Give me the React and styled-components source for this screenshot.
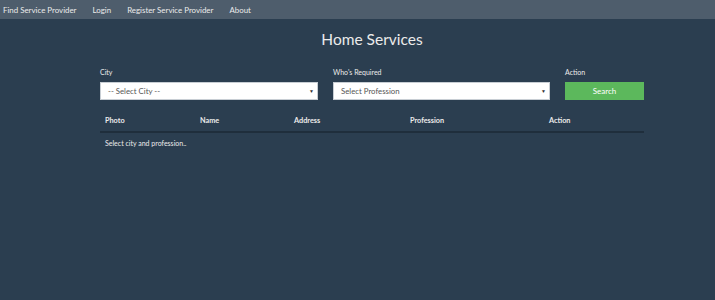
import React from 'react'
import styled, { createGlobalStyle } from 'styled-components'

const GlobalStyle = createGlobalStyle`
  html, body {
    margin: 0;
    padding: 0;
    background: #2b3e50;
    font-family: Lato, "Open Sans", sans-serif;
    color: #ebebeb;
  }
`

const Navbar = styled.nav`
  display: flex;
  align-items: center;
  gap: 16px;
  height: 19px;
  padding-left: 3px;
  background: #4e5d6c;
`

const NavLink = styled.a`
  font-size: 7.9px;
  color: #ebebeb;
  text-decoration: none;
  white-space: nowrap;
`

const Container = styled.main`
  width: 544px;
  margin-left: 100px;
`

const Title = styled.h1`
  margin: 10px 0 0;
  height: 38px;
  line-height: 20px;
  text-align: center;
  font-size: 15.5px;
  font-weight: 400;
  color: #ebebeb;
`

const FormRow = styled.div`
  display: grid;
  grid-template-columns: 218px 217px 79px;
  column-gap: 15px;
`

const Field = styled.div`
  display: flex;
  flex-direction: column;
`

const Label = styled.label`
  font-size: 7px;
  line-height: 10px;
  height: 15px;
  color: #ebebeb;
`

const SelectBox = styled.div`
  position: relative;
  height: 18px;
  box-sizing: border-box;
  background: #fff;
  border: 1px solid #c8ced4;
  padding-left: 7px;
  font-size: 7.8px;
  line-height: 16px;
  color: #555;
`

const Caret = styled.span`
  position: absolute;
  right: 3px;
  top: 0;
  font-size: 5px;
  color: #333;
`

const SearchButton = styled.button`
  height: 18px;
  border: none;
  background: #5cb85c;
  color: #fff;
  font-family: inherit;
  font-size: 8px;
  padding: 0;
`

const Table = styled.table`
  width: 544px;
  margin-top: 11px;
  border-collapse: collapse;
  table-layout: fixed;
  font-size: 7.3px;
`

const HeadCell = styled.th`
  box-sizing: border-box;
  width: ${p => p.w}px;
  text-align: left;
  font-weight: 700;
  padding: 0 5px 2px;
  height: 21px;
  border-bottom: 2px solid #1f2e3c;
`

const Cell = styled.td`
  padding: 6px 5px;
  font-size: 7px;
  color: #ebebeb;
`

const columns = [
  ['Photo', 95],
  ['Name', 94],
  ['Address', 116],
  ['Profession', 139],
  ['Action', 100],
]

export default function App() {
  return (
    <>
      <GlobalStyle />
      <Navbar>
        <NavLink href="#">Find Service Provider</NavLink>
        <NavLink href="#">Login</NavLink>
        <NavLink href="#">Register Service Provider</NavLink>
        <NavLink href="#">About</NavLink>
      </Navbar>
      <Container>
        <Title>Home Services</Title>
        <FormRow>
          <Field>
            <Label>City</Label>
            <SelectBox>
              -- Select City --
              <Caret>▼</Caret>
            </SelectBox>
          </Field>
          <Field>
            <Label>Who's Required</Label>
            <SelectBox>
              Select Profession
              <Caret>▼</Caret>
            </SelectBox>
          </Field>
          <Field>
            <Label>Action</Label>
            <SearchButton>Search</SearchButton>
          </Field>
        </FormRow>
        <Table>
          <thead>
            <tr>
              {columns.map(([name, w]) => (
                <HeadCell key={name} w={w}>{name}</HeadCell>
              ))}
            </tr>
          </thead>
          <tbody>
            <tr>
              <Cell colSpan={5}>Select city and profession..</Cell>
            </tr>
          </tbody>
        </Table>
      </Container>
    </>
  )
}
